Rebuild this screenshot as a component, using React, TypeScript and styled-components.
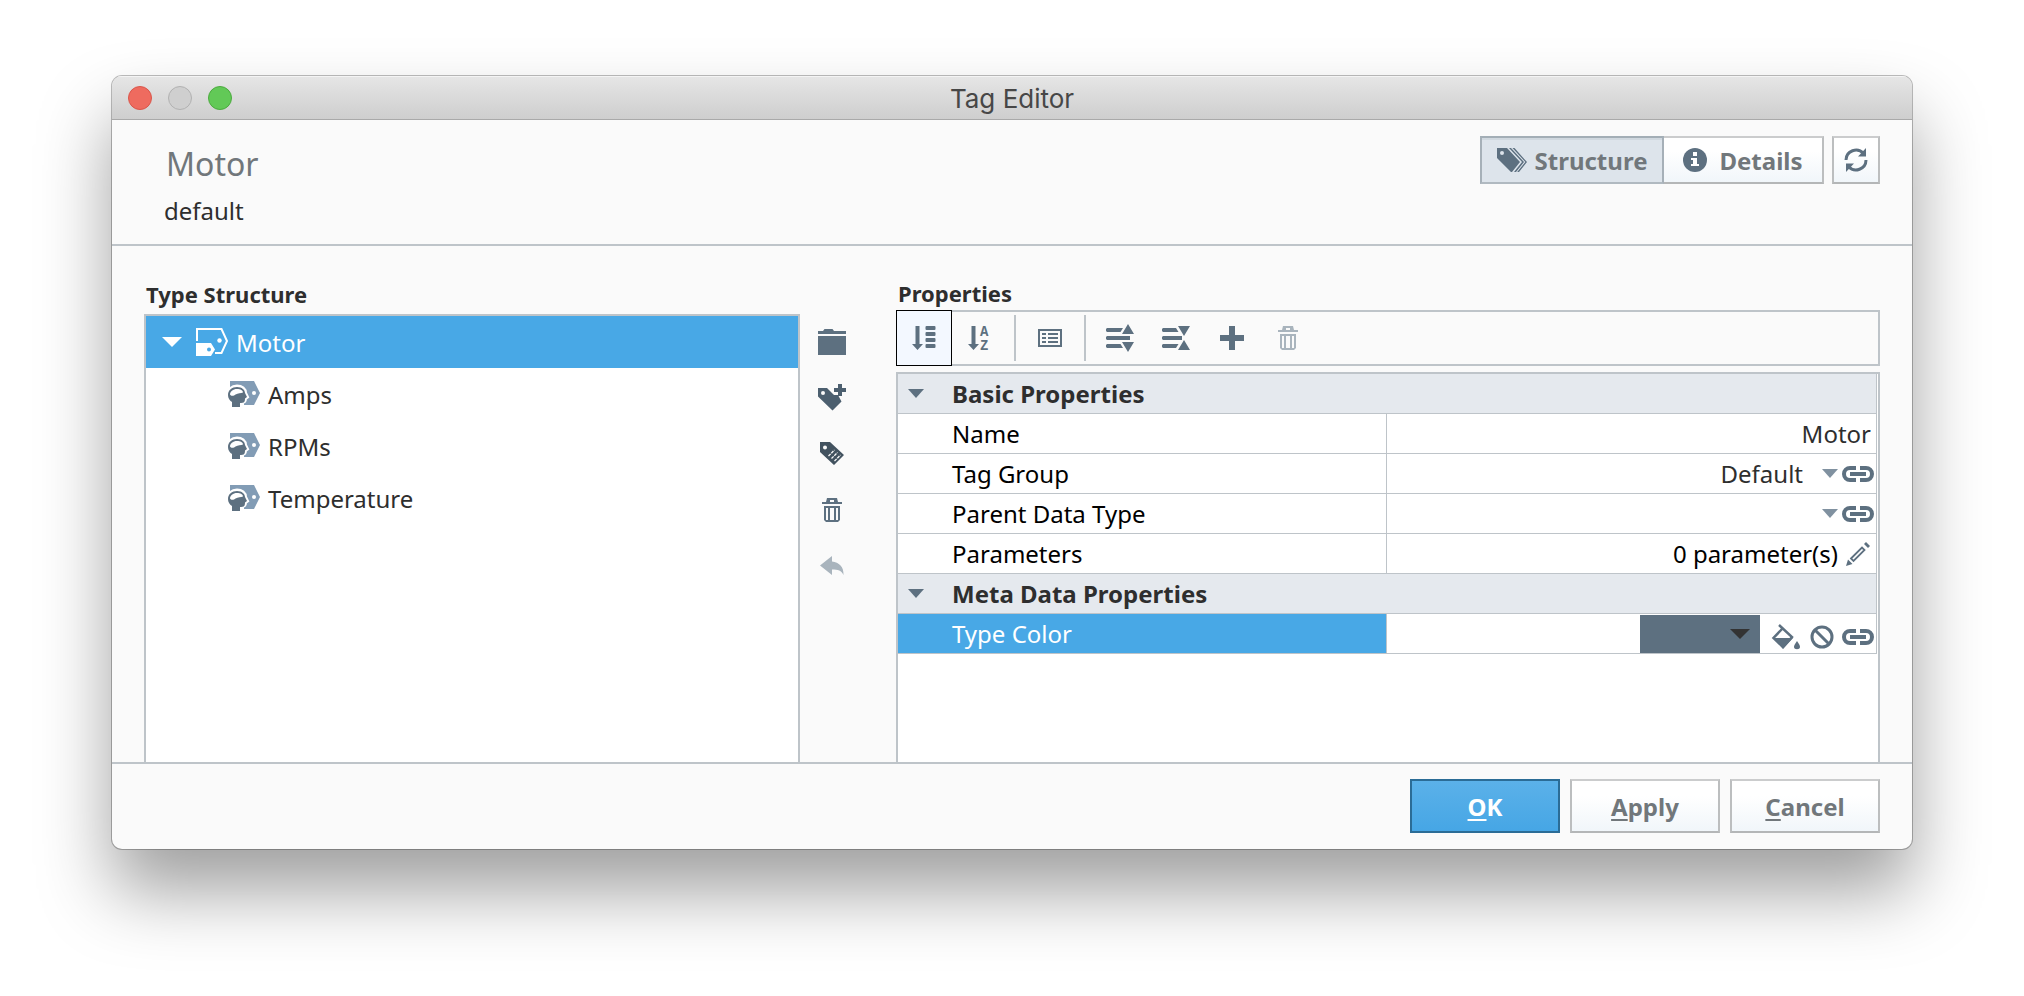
import React from 'react';
import styled, { createGlobalStyle, css } from 'styled-components';

const color = {
  slate: '#5d7080',
  blue: '#48a8e6',
  line: '#bec4c9',
  panel: '#fafafa',
  group: '#e5e9ee',
  text: '#2e2e2e',
  muted: '#71777b',
};

const GlobalStyle = createGlobalStyle`
  *, *::before, *::after { box-sizing: border-box; }
  body {
    margin: 0;
    background: #fff;
    color: ${color.text};
    font-family: 'Noto Sans', 'Open Sans', sans-serif;
    font-size: 24px;
  }
  button, input, select { font: inherit; color: inherit; margin: 0; }
  svg { display: block; flex: none; overflow: visible; }
`;

/* ---------- window frame ---------- */

const Desktop = styled.main`
  display: flex;
  min-height: 100vh;
  padding: 76px 112px 147px;
`;

const Window = styled.section`
  flex: 1;
  min-width: 0;
  display: flex;
  flex-direction: column;
  overflow: hidden;
  border-radius: 10px;
  background: ${color.panel};
  box-shadow: 0 0 0 1px rgba(0, 0, 0, 0.26), 0 42px 72px rgba(0, 0, 0, 0.38);
`;

const TitleBar = styled.header`
  display: grid;
  grid-template-columns: 1fr auto 1fr;
  align-items: center;
  height: 44px;
  padding: 0 16px;
  border-bottom: 1px solid #a9a9a9;
  background: linear-gradient(#e6e6e6, #cecece);
  box-shadow: inset 0 1px 0 #f4f4f4;
`;

const Lights = styled.div`
  display: flex;
  gap: 16px;
`;

const Light = styled.button<{ $fill: string; $edge: string }>`
  width: 24px;
  height: 24px;
  padding: 0;
  border: 1px solid ${(p) => p.$edge};
  border-radius: 50%;
  background: ${(p) => p.$fill};
`;

const WindowTitle = styled.h1`
  margin: 0;
  padding-top: 2px;
  font: 400 26px/32px Inter, Roboto, sans-serif;
  color: #474747;
`;

/* ---------- header ---------- */

const Header = styled.div`
  display: flex;
  justify-content: space-between;
  align-items: flex-start;
  padding: 16px 32px 16px 52px;
  border-bottom: 2px solid ${color.line};
`;

const TagInfo = styled.div`
  display: grid;
  gap: 8px;
  padding-top: 6px;
`;

const TagName = styled.h2`
  margin: 0;
  padding-left: 2px;
  font-size: 32px;
  line-height: 44px;
  font-weight: 400;
  color: ${color.muted};
`;

const Provider = styled.p`
  margin: 0;
  line-height: 34px;
`;

const HeaderActions = styled.div`
  display: flex;
  gap: 8px;
`;

const raised = css`
  border: 2px solid;
  border-color: #cbcccd #bcbebf #b4b6b7;
  background: linear-gradient(#fff 30%, #f1f6fa);
`;

const Segments = styled.div`
  display: flex;
`;

const Segment = styled.button<{ $on?: boolean }>`
  display: flex;
  align-items: center;
  justify-content: center;
  gap: ${(p) => (p.$on ? 8 : 12)}px;
  height: 48px;
  width: ${(p) => (p.$on ? 184 : 160)}px;
  padding: 0;
  font-weight: 700;
  color: ${color.muted};
  ${raised}
  ${(p) =>
    p.$on
      ? css`
          border-color: #a3aeb6 #a6b0b8 #b0b9c0;
          background: #dde4eb;
          box-shadow: inset 0 2px 0 #d0d8df;
        `
      : css`
          border-left: 0;
        `}
`;

const SquareButton = styled.button`
  display: grid;
  place-items: center;
  width: 48px;
  height: 48px;
  padding: 0;
  ${raised}
`;

/* ---------- body ---------- */

const Body = styled.div`
  flex: 1;
  display: grid;
  grid-template-columns: minmax(0, 2fr) 96px minmax(0, 3fr);
  padding: 32px 32px 0;
`;

const Column = styled.section`
  display: flex;
  flex-direction: column;
`;

const PanelTitle = styled.h3<{ $tall?: boolean }>`
  margin: 0;
  padding: 0 0 ${(p) => (p.$tall ? 4 : 2)}px 2px;
  font-size: 22px;
  line-height: ${(p) => (p.$tall ? 32 : 30)}px;
`;

const Tree = styled.ul`
  flex: 1;
  margin: 0;
  padding: 0;
  list-style: none;
  border: 2px solid ${color.line};
  border-bottom: 0;
  background: #fff;
`;

const TreeGroup = styled.ul`
  margin: 0;
  padding: 0;
  list-style: none;
`;

const TreeRow = styled.div<{ $root?: boolean }>`
  display: flex;
  align-items: center;
  gap: 8px;
  height: 52px;
  padding-left: ${(p) => (p.$root ? 16 : 82)}px;
  background: ${(p) => (p.$root ? color.blue : 'transparent')};
  color: ${(p) => (p.$root ? '#fff' : 'inherit')};
`;

const Expander = styled.button`
  display: grid;
  width: 26px;
  padding: 0;
  border: 0;
  background: none;
`;

const SideTools = styled.div`
  display: flex;
  flex-direction: column;
  width: 64px;
  padding-top: 36px;
`;

const ToolButton = styled.button<{ $on?: boolean }>`
  display: grid;
  place-items: center;
  height: 56px;
  min-width: 56px;
  padding: 0;
  border: ${(p) => (p.$on ? '1px solid #000' : '0')};
  background: ${(p) => (p.$on ? '#f3f8ff' : 'none')};
  color: ${color.slate};
  &:disabled { color: #a9b4bd; }
`;

const Toolbar = styled.div`
  display: flex;
  align-items: center;
  height: 56px;
  margin-bottom: 6px;
  box-shadow: inset 0 0 0 2px ${color.line};
`;

const Divider = styled.span`
  width: 2px;
  height: 46px;
  margin: 0 6px;
  background: ${color.line};
`;

const Properties = styled.div`
  flex: 1;
  padding-right: 1px;
  border: 2px solid ${color.line};
  border-bottom: 0;
  background: #fff;
`;

const Grid = styled.table`
  width: 100%;
  table-layout: fixed;
  border-collapse: separate;
  border-spacing: 0;
  border-right: 1px solid ${color.line};
`;

const GroupCell = styled.th`
  height: 40px;
  padding: 0;
  border-bottom: 1px solid ${color.line};
  background: ${color.group};
  text-align: left;
  line-height: 38px;
`;

const GroupToggle = styled.button`
  display: flex;
  align-items: center;
  gap: 28px;
  width: 100%;
  height: 39px;
  padding: 0 0 0 10px;
  border: 0;
  background: none;
  font-weight: 700;
`;

const LabelCell = styled.th<{ $on?: boolean }>`
  height: 40px;
  padding: 0 0 0 54px;
  border-bottom: 1px solid ${color.line};
  border-right: 1px solid ${color.line};
  background: ${(p) => (p.$on ? color.blue : '#fff')};
  color: ${(p) => (p.$on ? '#fff' : '#000')};
  text-align: left;
  font-weight: 400;
  line-height: 38px;
`;

const ValueCell = styled.td`
  height: 40px;
  padding: 0;
  border-bottom: 1px solid ${color.line};
`;

const Value = styled.div<{ $pad?: number }>`
  display: flex;
  justify-content: flex-end;
  align-items: center;
  height: 39px;
  padding-right: ${(p) => p.$pad ?? 2}px;
`;

const CellTools = styled.div`
  display: flex;
  align-items: center;
  padding-top: 6px;
`;

const TextInput = styled.input`
  width: 100%;
  height: 38px;
  padding: 0;
  border: 0;
  outline: 0;
  background: none;
  text-align: right;
`;

const Picker = styled.span<{ $swatch?: boolean }>`
  position: relative;
  display: flex;
  align-items: center;
  flex: ${(p) => (p.$swatch ? '0 0 120px' : '1')};
  margin-right: ${(p) => (p.$swatch ? 12 : 3)}px;
  background: ${(p) => (p.$swatch ? color.slate : 'none')};
`;

const PickerArrow = styled.span<{ $inset: number }>`
  position: absolute;
  right: ${(p) => p.$inset}px;
  pointer-events: none;
`;

const Select = styled.select`
  appearance: none;
  width: 100%;
  height: 38px;
  padding: 0 36px 0 0;
  border: 0;
  outline: 0;
  background: none;
  text-align: right;
  text-align-last: right;
`;

const Count = styled.span`
  padding-right: 8px;
  color: #000;
`;

const CellButton = styled.button<{ $gap?: number }>`
  padding: 0;
  margin-right: ${(p) => p.$gap ?? 0}px;
  border: 0;
  background: none;
  color: ${color.slate};
`;

/* ---------- footer ---------- */

const Footer = styled.footer`
  display: flex;
  justify-content: flex-end;
  gap: 10px;
  padding: 15px 32px 16px;
  border-top: 2px solid ${color.line};
`;

const FooterButton = styled.button<{ $primary?: boolean }>`
  width: 150px;
  height: 54px;
  padding: 0;
  font-weight: 700;
  color: ${color.muted};
  ${raised}
  ${(p) =>
    p.$primary &&
    css`
      border-color: #2b6c96;
      background: linear-gradient(#5bb1e9, #46a6e5);
      color: #fff;
    `}
`;

const Key = styled.span`
  text-decoration: underline;
  text-decoration-thickness: 2px;
  text-underline-offset: 3px;
`;

/* ---------- icons ---------- */

type IconProps = { w: number; h: number; children: React.ReactNode };
const Icon = ({ w, h, children }: IconProps) => (
  <svg width={w} height={h} viewBox={`0 0 ${w} ${h}`} fill="currentColor" aria-hidden="true">
    {children}
  </svg>
);

const Triangle = ({ w, h, fill }: { w: number; h: number; fill: string }) => (
  <Icon w={w} h={h}>
    <path d={`M0 0H${w}L${w / 2} ${h}Z`} fill={fill} />
  </Icon>
);

const TagsIcon = () => (
  <Icon w={30} h={24}>
    <g fill={color.slate}>
      <path fillRule="evenodd" d="M0 0H10L23 14L15 24H14L0 10ZM5 3a2 2 0 1 0 0 4a2 2 0 1 0 0-4Z" />
      <path d="M12 0H14L27 14L19 24H17L25 14Z" />
      <path d="M15.500 0H17.500L30 14L22 24H20.200L28.300 14Z" />
    </g>
  </Icon>
);

const InfoIcon = () => (
  <Icon w={24} h={24}>
    <circle cx="12" cy="12" r="12" fill={color.slate} />
    <path d="M10 4h4v4h-4zM8 10h6v6h2v2H8v-2h2v-4H8z" fill="#fff" />
  </Icon>
);

const RefreshIcon = () => (
  <Icon w={24} h={24}>
    <g fill={color.slate}>
      <path d="M22 0V8.500H14ZM2 15.500H10L2 24Z" />
      <path d="M2 12A10 10 0 0 1 19.500 5.500M22 12A10 10 0 0 1 4.500 18.500" fill="none" stroke={color.slate} strokeWidth="3" />
    </g>
  </Icon>
);

const TypeIcon = () => (
  <Icon w={32} h={28}>
    <path d="M1 13V1H25.500L31 13L25.500 25H19" fill="none" stroke="#fff" strokeWidth="2" />
    <circle cx="23.500" cy="12.500" r="2.200" />
    <path fillRule="evenodd" d="M0 15H15L19 21.500L15 28H0ZM13 19.500a2 2 0 1 0 0 4a2 2 0 1 0 0-4Z" />
  </Icon>
);

const MemoryTagIcon = () => (
  <Icon w={32} h={26}>
    <path d="M2 0H26L32 12L26 24H16V12L2 6Z" fill="#829cb5" />
    <circle cx="26" cy="12" r="2" fill="#fff" />
    <path d="M0 14C0 8 4 5 9 5C14 5 17.500 8 17.500 12L19.500 16L17.500 17.500C17.500 21 16 21.500 13 21.500V26H4V21C1.500 19.500 0 17 0 14Z" stroke="#fff" strokeWidth="3" fill="#fff" />
    <path d="M0 14C0 9 4 6 9 6C14 6 17 9 17 12L19 16L17 17.500C17 21.500 15.500 22 12 22V26H4V21C1.500 19.500 0 17 0 14Z" fill={color.slate} />
    <path d="M2 13.500C2 10.500 5 8 9 8C12.500 8 15 9.500 15 11.500C13 12.500 10 12 7.500 13.500C6 15 3 15.500 2 13.500Z" fill="#fff" />
  </Icon>
);

const FolderIcon = () => (
  <Icon w={28} h={26}>
    <path d="M0 2H5L6.500 0H14.500L16 2H28V5H0ZM0 7H28V26H0Z" />
  </Icon>
);

const AddTagIcon = () => (
  <Icon w={28} h={28}>
    <g fill="#4c5f6f">
      <path fillRule="evenodd" d="M0 4H9L16 11H20L23.500 17.500L14.500 26.500L0 12.500ZM5 7a2 2 0 1 0 0 4a2 2 0 1 0 0-4Z" />
      <path d="M20 0h4v4h4v4h-4v4h-4V8h-4V4h4z" />
    </g>
  </Icon>
);

const BarcodeTagIcon = () => (
  <Icon w={24} h={24}>
    <path fillRule="evenodd" d="M0 0H10L24 13L14 23L0 10ZM5 3.500a2 2 0 1 0 0 4a2 2 0 1 0 0-4Z" fill="#42525f" />
    <path d="M8.500 14L14.500 8M11.500 16.500L17.500 10.500M14.500 19L20.500 13" stroke={color.panel} strokeWidth="1.300" strokeDasharray="3 1" />
  </Icon>
);

const TrashIcon = () => (
  <Icon w={20} h={24}>
    <path fillRule="evenodd" d="M5 0H15L16 4H20V6H0V4H4ZM8 2V4H12V2ZM2 8H18V22L16 24H4L2 22ZM4 10V22H6V10ZM8 10V22H12V10ZM14 10V22H16V10Z" />
  </Icon>
);

const UndoIcon = () => (
  <Icon w={24} h={20}>
    <path d="M0 9.500L12 0V5.500C19 6 24 11 23.500 19C21.500 14.500 18 13.500 12 13.500V19Z" />
  </Icon>
);

const SortCategoryIcon = () => (
  <Icon w={24} h={24}>
    <path d="M3.500 0H7.500V18H11L5.500 24L0 18H3.500Z" />
    {[0, 6, 12, 18].map((y) => (
      <rect key={y} x="13.500" y={y} width="10" height="4" rx="1" />
    ))}
  </Icon>
);

const SortAlphaIcon = () => (
  <Icon w={24} h={24}>
    <path d="M3.500 0H7.500V18H11L5.500 24L0 18H3.500Z" />
    <g fontFamily="'Liberation Mono', monospace" fontWeight="700" fontSize="14">
      <text x="12" y="10">A</text>
      <text x="12" y="24">Z</text>
    </g>
  </Icon>
);

const ListIcon = () => (
  <Icon w={24} h={18}>
    <path fillRule="evenodd" d="M0 0H24V18H0ZM2 2V16H22V2Z" />
    <path d="M4 4h4v2H4zM10 4h10v2H10zM4 8h4v2H4zM10 8h10v2H10zM4 12h4v2H4zM10 12h10v2H10z" />
  </Icon>
);

const ExpandIcon = () => (
  <Icon w={28} h={28}>
    <path d="M1 4H17L14.500 8H1L0 7V5ZM1 12H24V16H1L0 15V13ZM1 20H14.500L17 24H1L0 23V21ZM22 0L28 10H16ZM16 18H28L22 28Z" />
  </Icon>
);

const CollapseIcon = () => (
  <Icon w={28} h={28}>
    <path d="M1 4H14L16.500 8H1L0 7V5ZM1 12H20V16H1L0 15V13ZM1 20H16.500L14 24H1L0 23V21ZM16 2H28L22 12ZM22 16L28 26H16Z" />
  </Icon>
);

const PlusIcon = () => (
  <Icon w={24} h={24}>
    <path d="M9 0H15V9H24V15H15V24H9V15H0V9H9Z" />
  </Icon>
);

const LinkIcon = () => (
  <Icon w={32} h={16}>
    <path d="M14 2H8A6 6 0 0 0 8 14H14M18 2H24A6 6 0 0 1 24 14H18" fill="none" stroke="currentColor" strokeWidth="4" />
    <rect x="8" y="6" width="16" height="4" />
  </Icon>
);

const PencilIcon = () => (
  <Icon w={24} h={24}>
    <path d="M0 24L2 17.500L6.500 22ZM18 2L20 0L24 4L22 6Z" />
    <path d="M5 16.500L16 5.500L18.500 8L7.500 19Z" fill="none" stroke="currentColor" strokeWidth="1.800" />
  </Icon>
);

const FillIcon = () => (
  <Icon w={28} h={26}>
    <path d="M7 1L20 13L11 23L1.500 14L10 5" fill="none" stroke="currentColor" strokeWidth="2.500" />
    <path d="M2 14H21L11 25ZM25 17C27 20 28 21 28 23C28 26 22 26 22 23C22 21 23 20 25 17Z" />
  </Icon>
);

const BanIcon = () => (
  <Icon w={24} h={24}>
    <circle cx="12" cy="12" r="10" fill="none" stroke="currentColor" strokeWidth="3" />
    <path d="M5 5L19 19" stroke="currentColor" strokeWidth="3" />
  </Icon>
);

/* ---------- content ---------- */

const members = ['Amps', 'RPMs', 'Temperature'];

const GroupRow = ({ title }: { title: string }) => (
  <tr>
    <GroupCell colSpan={2} scope="colgroup">
      <GroupToggle aria-expanded="true">
        <Triangle w={16} h={9} fill={color.slate} />
        {title}
      </GroupToggle>
    </GroupCell>
  </tr>
);

const LinkedSelect = ({ id, value }: { id: string; value: string }) => (
  <Value>
    <Picker>
      <Select id={id} defaultValue={value}>
        <option value={value}>{value}</option>
      </Select>
      <PickerArrow $inset={1}>
        <Triangle w={16} h={9} fill="#8091a0" />
      </PickerArrow>
    </Picker>
    <CellButton aria-label="Bind value">
      <LinkIcon />
    </CellButton>
  </Value>
);

export default function App() {
  return (
    <>
      <GlobalStyle />
      <Desktop>
        <Window>
          <TitleBar>
            <Lights>
              <Light $fill="#ee6b5f" $edge="#d9564b" aria-label="Close" />
              <Light $fill="#cfcfcf" $edge="#b1b1b1" aria-label="Minimize" />
              <Light $fill="#62c957" $edge="#4caa3f" aria-label="Zoom" />
            </Lights>
            <WindowTitle>Tag Editor</WindowTitle>
          </TitleBar>

          <Header>
            <TagInfo>
              <TagName>Motor</TagName>
              <Provider>default</Provider>
            </TagInfo>
            <HeaderActions>
              <Segments>
                <Segment $on aria-pressed="true">
                  <TagsIcon />
                  Structure
                </Segment>
                <Segment aria-pressed="false">
                  <InfoIcon />
                  Details
                </Segment>
              </Segments>
              <SquareButton aria-label="Refresh">
                <RefreshIcon />
              </SquareButton>
            </HeaderActions>
          </Header>

          <Body>
            <Column>
              <PanelTitle $tall>Type Structure</PanelTitle>
              <Tree role="tree">
                <li role="treeitem" aria-expanded="true" aria-selected="true">
                  <TreeRow $root>
                    <Expander aria-label="Collapse Motor">
                      <Triangle w={20} h={10} fill="#fff" />
                    </Expander>
                    <TypeIcon />
                    Motor
                  </TreeRow>
                  <TreeGroup role="group">
                    {members.map((name) => (
                      <li key={name} role="treeitem">
                        <TreeRow>
                          <MemoryTagIcon />
                          {name}
                        </TreeRow>
                      </li>
                    ))}
                  </TreeGroup>
                </li>
              </Tree>
            </Column>

            <SideTools>
              <ToolButton aria-label="New folder"><FolderIcon /></ToolButton>
              <ToolButton aria-label="Add tag"><AddTagIcon /></ToolButton>
              <ToolButton aria-label="Add type instance"><BarcodeTagIcon /></ToolButton>
              <ToolButton aria-label="Delete tag"><TrashIcon /></ToolButton>
              <ToolButton aria-label="Revert" disabled><UndoIcon /></ToolButton>
            </SideTools>

            <Column>
              <PanelTitle>Properties</PanelTitle>
              <Toolbar>
                <ToolButton $on aria-label="Sort by category"><SortCategoryIcon /></ToolButton>
                <ToolButton aria-label="Sort by name"><SortAlphaIcon /></ToolButton>
                <Divider />
                <ToolButton aria-label="Show description"><ListIcon /></ToolButton>
                <Divider />
                <ToolButton aria-label="Expand all"><ExpandIcon /></ToolButton>
                <ToolButton aria-label="Collapse all"><CollapseIcon /></ToolButton>
                <ToolButton aria-label="Add property"><PlusIcon /></ToolButton>
                <ToolButton aria-label="Remove property" disabled><TrashIcon /></ToolButton>
              </Toolbar>
              <Properties>
                <Grid>
                  <tbody>
                    <GroupRow title="Basic Properties" />
                    <tr>
                      <LabelCell scope="row"><label htmlFor="name">Name</label></LabelCell>
                      <ValueCell>
                        <Value $pad={5}><TextInput id="name" defaultValue="Motor" /></Value>
                      </ValueCell>
                    </tr>
                    <tr>
                      <LabelCell scope="row"><label htmlFor="group">Tag Group</label></LabelCell>
                      <ValueCell><LinkedSelect id="group" value="Default" /></ValueCell>
                    </tr>
                    <tr>
                      <LabelCell scope="row"><label htmlFor="parent">Parent Data Type</label></LabelCell>
                      <ValueCell><LinkedSelect id="parent" value="" /></ValueCell>
                    </tr>
                    <tr>
                      <LabelCell scope="row">Parameters</LabelCell>
                      <ValueCell>
                        <Value $pad={6}>
                          <Count>0 parameter(s)</Count>
                          <CellButton aria-label="Edit parameters"><PencilIcon /></CellButton>
                        </Value>
                      </ValueCell>
                    </tr>
                    <GroupRow title="Meta Data Properties" />
                    <tr>
                      <LabelCell $on scope="row"><label htmlFor="color">Type Color</label></LabelCell>
                      <ValueCell>
                        <Value>
                          <Picker $swatch>
                            <Select id="color" defaultValue="">
                              <option value="" />
                            </Select>
                            <PickerArrow $inset={10}>
                              <Triangle w={20} h={10} fill="#333" />
                            </PickerArrow>
                          </Picker>
                          <CellTools>
                            <CellButton $gap={10} aria-label="Pick fill"><FillIcon /></CellButton>
                            <CellButton $gap={8} aria-label="Clear color"><BanIcon /></CellButton>
                            <CellButton aria-label="Bind color"><LinkIcon /></CellButton>
                          </CellTools>
                        </Value>
                      </ValueCell>
                    </tr>
                  </tbody>
                </Grid>
              </Properties>
            </Column>
          </Body>

          <Footer>
            <FooterButton $primary><Key>O</Key>K</FooterButton>
            <FooterButton><Key>A</Key>pply</FooterButton>
            <FooterButton><Key>C</Key>ancel</FooterButton>
          </Footer>
        </Window>
      </Desktop>
    </>
  );
}
